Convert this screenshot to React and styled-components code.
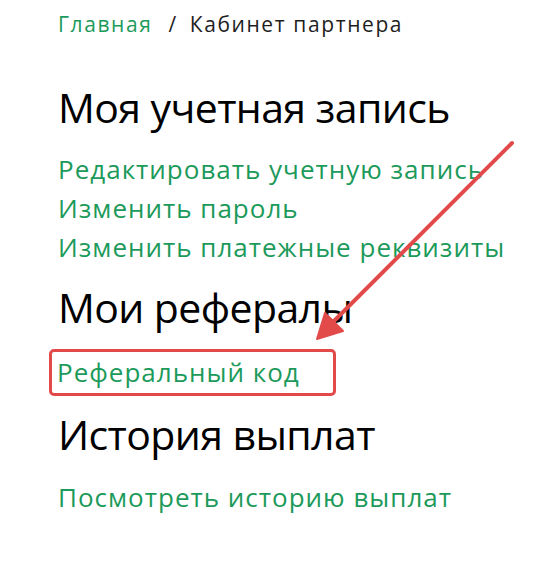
import React from "react";
import styled, { createGlobalStyle } from "styled-components";

const Global = createGlobalStyle`
  html, body { margin: 0; padding: 0; background: #fff; }
  body { font-family: "Open Sans", "Noto Sans", sans-serif; }
`;

const Page = styled.div`
  position: relative;
  width: 557px;
  height: 583px;
  padding: 9px 0 0 58px;
  box-sizing: border-box;
  overflow: hidden;
`;

const Crumbs = styled.nav`
  display: flex;
  align-items: baseline;
  font-size: 21px;
  line-height: 30px;
  letter-spacing: 1.6px;
  color: #1e1e1e;
`;

const CrumbLink = styled.a`
  color: #1c9a5a;
  text-decoration: none;
`;

const Sep = styled.span`
  margin: 0 12px 0 16px;
`;

const Heading = styled.h2`
  margin: ${(p) => p.$mt}px 0 0 0;
  font-size: 41px;
  line-height: 50px;
  letter-spacing: -0.6px;
  font-weight: 400;
  color: #000;
`;

const LinkList = styled.div`
  display: flex;
  flex-direction: column;
  align-items: flex-start;
  margin-top: ${(p) => p.$mt}px;
`;

const NavLink = styled.a`
  font-size: 26px;
  line-height: 39px;
  letter-spacing: 1px;
  color: #1c9a5a;
  text-decoration: none;
  white-space: nowrap;
`;

const Highlight = styled.div`
  margin-left: -9px;
  padding: 1px 33px 1px 5px;
  border: 3px solid #e24a4a;
  border-radius: 5px;
`;

const Arrow = styled.svg`
  position: absolute;
  left: 0;
  top: 0;
  pointer-events: none;
`;

export default function App() {
  return (
    <>
      <Global />
      <Page>
        <Crumbs>
          <CrumbLink href="#">Главная</CrumbLink>
          <Sep>/</Sep>
          <span>Кабинет партнера</span>
        </Crumbs>

        <Heading $mt={43}>Моя учетная запись</Heading>
        <LinkList $mt={18}>
          <NavLink href="#">Редактировать учетную запись</NavLink>
          <NavLink href="#">Изменить пароль</NavLink>
          <NavLink href="#">Изменить платежные реквизиты</NavLink>
        </LinkList>

        <Heading $mt={15}>Мои рефералы</Heading>
        <LinkList $mt={17}>
          <Highlight>
            <NavLink href="#">Реферальный код</NavLink>
          </Highlight>
        </LinkList>

        <Heading $mt={13}>История выплат</Heading>
        <LinkList $mt={19}>
          <NavLink href="#">Посмотреть историю выплат</NavLink>
        </LinkList>

        <Arrow width="557" height="583" viewBox="0 0 557 583">
          <line x1="512" y1="143" x2="332" y2="323" stroke="#e24a4a" strokeWidth="4" strokeLinecap="round" />
          <polygon points="317,339 325,313 343,331" fill="#e24a4a" stroke="#e24a4a" strokeWidth="2" strokeLinejoin="round" />
        </Arrow>
      </Page>
    </>
  );
}
